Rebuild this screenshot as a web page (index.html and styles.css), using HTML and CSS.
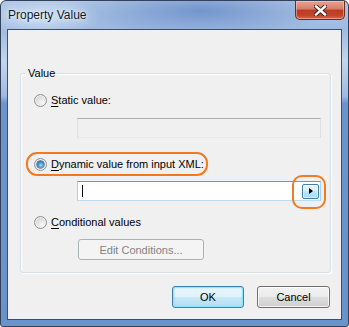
FILE: index.html
```html
<!DOCTYPE html>
<html lang="en">
<head>
  <meta charset="UTF-8">
  <title>Property Value</title>
  <link rel="stylesheet" href="styles.css">
</head>
<body>
  <div class="window">
    <div class="titlebar">
      <span class="title">Property Value</span>
      <button class="close" type="button" aria-label="Close">
        <svg width="13" height="11" viewBox="0 0 13 11">
          <path d="M2 1.5 L11 9.5 M11 1.5 L2 9.5" stroke="#3a1c16" stroke-width="4.2" stroke-linecap="square"/>
          <path d="M2 1.5 L11 9.5 M11 1.5 L2 9.5" stroke="#ffffff" stroke-width="2.4" stroke-linecap="square"/>
        </svg>
      </button>
    </div>

    <div class="client">
      <div class="group">
        <span class="group-label">Value</span>

        <label class="option">
          <span class="radio"></span>
          <span><u>S</u>tatic value:</span>
        </label>
        <div class="textbox disabled"></div>

        <label class="option">
          <span class="radio checked"></span>
          <span><u>D</u>ynamic value from input XML:</span>
        </label>
        <div class="textbox focused">
          <span class="caret"></span>
          <button class="browse" type="button" aria-label="Browse"></button>
        </div>

        <label class="option">
          <span class="radio"></span>
          <span><u>C</u>onditional values</span>
        </label>
        <button class="btn edit" type="button" disabled>Edit Conditions...</button>

        <span class="mark mark-option"></span>
        <span class="mark mark-browse"></span>
      </div>

      <div class="actions">
        <button class="btn default ok" type="button">OK</button>
        <button class="btn cancel" type="button">Cancel</button>
      </div>
    </div>
  </div>
</body>
</html>
```

FILE: styles.css
```css
* {
  box-sizing: border-box;
  margin: 0;
  padding: 0;
}
body {
  background-color: white;
  font-family: 'Segoe UI', 'Liberation Sans', Arial, sans-serif;
  font-size: 11px;
  color: black;
}
.window {
  width: 349px;
  height: 327px;
  border: 1px solid #33425a;
  border-radius: 6px 6px 3px 3px;
  padding: 0 6px 6px;
  background:
    radial-gradient(ellipse 130px 26px at 200px 10px, rgba(80, 120, 190, 0.6), rgba(80, 120, 190, 0)),
    radial-gradient(ellipse 60px 20px at 40px 16px, rgba(225, 235, 248, 0.7), rgba(225, 235, 248, 0)),
    linear-gradient(to bottom, #aec5e5 0, #9fbbe1 28px, #c3d5ec 60px, #9fbbe2 95px, #6c94cc 102px, #6a92cb 100%);
  display: flex;
  flex-direction: column;
}
.titlebar {
  height: 28px;
  margin: 0 -6px;
  display: flex;
  justify-content: space-between;
  align-items: flex-start;
}
.title {
  padding: 7px 0 0 7px;
  font-size: 12px;
  line-height: 15px;
  color: #0b1a2c;
  text-shadow: 0 0 6px rgba(255, 255, 255, 0.9), 0 0 2px rgba(255, 255, 255, 0.8);
}
.close {
  width: 50px;
  height: 19px;
  margin-right: 3px;
  border: 1px solid #6b2c22;
  border-top: none;
  border-radius: 0 0 5px 5px;
  background: linear-gradient(to bottom, #e6a391 0, #d77c67 45%, #bf3a24 50%, #c2432a 80%, #d06c4f 100%);
  box-shadow: inset 0 0 0 1px rgba(255, 220, 210, 0.45);
  display: flex;
  align-items: center;
  justify-content: center;
}
.close svg {
  display: block;
}
.client {
  flex: 1;
  background-color: #f0f0f0;
  border: 1px solid #3d4e68;
  display: flex;
  flex-direction: column;
}
.group {
  position: relative;
  margin: 43px 10px 0 12px;
  padding: 19px 9px 12px 13px;
  border: 1px solid #d5dfe5;
  border-radius: 3px;
  box-shadow: inset 1px 1px 0 #ffffff, 1px 1px 0 #ffffff;
  display: flex;
  flex-direction: column;
  align-items: flex-start;
}
.group-label {
  position: absolute;
  top: -8px;
  left: 5px;
  padding: 0 2px;
  line-height: 15px;
  background-color: #f0f0f0;
}
.option {
  height: 15px;
  line-height: 15px;
  display: flex;
  align-items: center;
  gap: 4px;
  white-space: nowrap;
}
.option u {
  text-decoration-thickness: 1px;
  text-underline-offset: 2px;
}
.radio {
  position: relative;
  width: 13px;
  height: 13px;
  flex: none;
  border-radius: 50%;
  border: 1px solid #8e9093;
  background: radial-gradient(circle at 65% 70%, #f7f7f7 0, #e2e2e2 45%, #c9c9c9 100%);
  box-shadow: inset 0 0 0 1px #f2f2f2;
}
.radio.checked::after {
  content: "";
  position: absolute;
  top: 2px;
  left: 2px;
  width: 7px;
  height: 7px;
  border-radius: 50%;
  background: radial-gradient(circle at 55% 60%, #a6e1fb 0, #3b97d6 45%, #1b4f82 100%);
  box-shadow: 0 0 0 0.5px #1a3b5e;
}
.option + .textbox {
  align-self: stretch;
  margin-left: 43px;
  height: 20px;
}
.textbox {
  margin-top: 10px;
  border: 1px solid #dbdfe6;
  border-top-color: #abadb3;
  border-bottom-color: #e3e9ef;
  display: flex;
  align-items: center;
  justify-content: space-between;
  padding: 1px 1px 1px 4px;
}
.textbox.disabled {
  background-color: #f0f0f0;
}
.textbox.focused {
  margin-top: 9px;
  background-color: white;
  border-color: #a9d1ef;
  border-top-color: #5d9cd2;
  border-bottom-color: #b9dcf1;
}
.caret {
  width: 1px;
  height: 12px;
  background-color: black;
}
.browse {
  position: relative;
  width: 17px;
  height: 15px;
  border: 1px solid #3c7fb1;
  border-radius: 2px;
  background: linear-gradient(to bottom, #eaf6fd 0, #d9f0fc 45%, #bee6fd 50%, #a7d9f5 100%);
  box-shadow: inset 0 0 0 1px rgba(255, 255, 255, 0.6);
}
.browse::after {
  content: "";
  position: absolute;
  top: 3px;
  left: 6px;
  border-left: 4px solid #000;
  border-top: 3.5px solid transparent;
  border-bottom: 3.5px solid transparent;
}
.option:nth-of-type(2) {
  margin-top: 19px;
}
.option:nth-of-type(3) {
  margin-top: 14px;
}
.btn {
  font-family: 'Segoe UI', 'Liberation Sans', Arial, sans-serif;
  font-size: 11px;
  color: black;
  height: 22px;
  border: 1px solid #707070;
  border-radius: 3px;
  background: linear-gradient(to bottom, #f2f2f2 0, #ebebeb 48%, #dddddd 52%, #cfcfcf 100%);
  box-shadow: inset 0 0 0 1px rgba(255, 255, 255, 0.75);
}
.btn.edit {
  margin: 9px 0 0 44px;
  width: 126px;
  height: 21px;
  border-color: #adb2b5;
  background: #f4f4f4;
  box-shadow: none;
  color: #838383;
}
.actions {
  margin-top: 13px;
  padding-right: 11px;
  display: flex;
  justify-content: flex-end;
  gap: 13px;
}
.btn.ok {
  width: 72px;
}
.btn.cancel {
  width: 73px;
}
.btn.default {
  border-color: #3c7fb1;
  background: linear-gradient(to bottom, #eaf6fd 0, #e0f2fc 48%, #c6e8fa 52%, #b6dcf1 100%);
  box-shadow: inset 0 0 0 1px #8ee3fd, inset 0 0 2px 1px rgba(120, 220, 250, 0.6);
}
.mark {
  position: absolute;
  border: 2px solid #f47a20;
}
.mark-option {
  top: 78px;
  left: 5px;
  width: 182px;
  height: 24px;
  border-radius: 11px;
}
.mark-browse {
  top: 101px;
  left: 271px;
  width: 34px;
  height: 34px;
  border-radius: 10px;
}
```
